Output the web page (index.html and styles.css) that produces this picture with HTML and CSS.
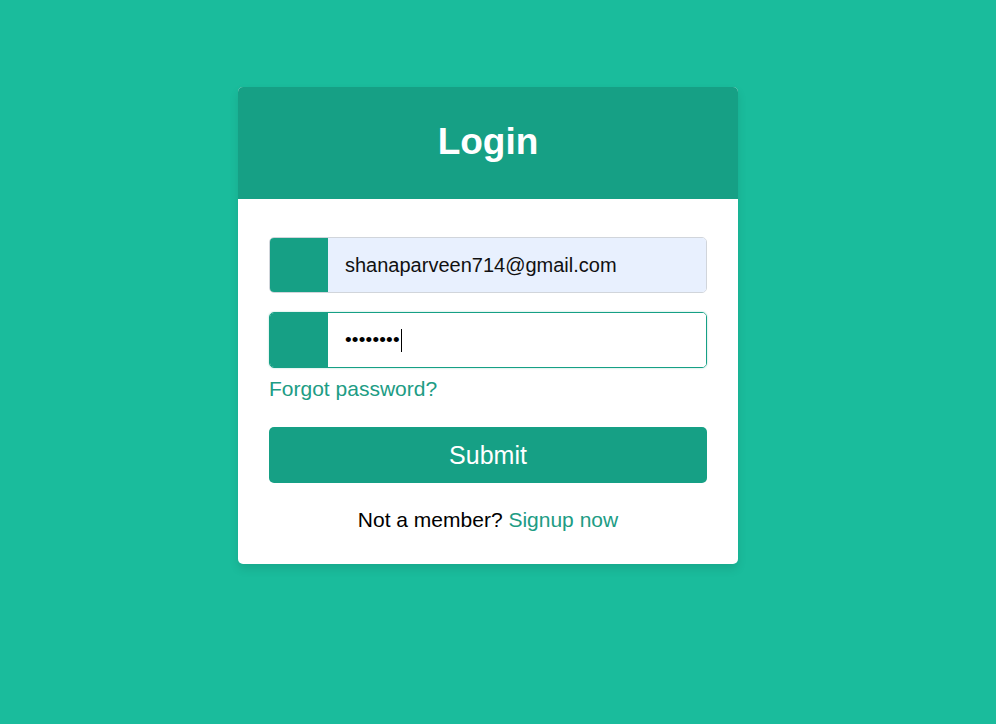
FILE: index.html
```html
<!DOCTYPE html>
<html>
<head>
<meta charset="utf-8">
<link rel="stylesheet" href="styles.css">
</head>
<body>
<div class="wrapper">
  <div class="title">Login</div>
  <form class="form">
    <div class="row">
      <span class="icon"></span>
      <input class="field autofill" type="text" value="shanaparveen714@gmail.com">
    </div>
    <div class="row focus">
      <span class="icon"></span>
      <div class="field pass"><span class="dots">••••••••</span><span class="caret"></span></div>
    </div>
    <div class="pass-link"><a href="#">Forgot password?</a></div>
    <div class="button">Submit</div>
    <div class="signup">Not a member? <a href="#">Signup now</a></div>
  </form>
</div>
</body>
</html>
```

FILE: styles.css
```css
* { box-sizing: border-box; margin: 0; padding: 0; }
body {
  background: #1abc9c;
  font-family: "Liberation Sans", Arial, sans-serif;
  width: 996px;
  height: 724px;
  padding-top: 87px;
}
.wrapper {
  width: 500px;
  margin: 0 auto 0 238px;
  background: #fff;
  border-radius: 5px;
  box-shadow: 0 5px 10px rgba(0,0,0,0.1);
  overflow: hidden;
}
.title {
  height: 112px;
  background: #16a085;
  color: #fff;
  font-size: 37px;
  font-weight: bold;
  display: flex;
  align-items: center;
  justify-content: center;
  padding-bottom: 2px;
}
.form {
  padding: 38px 31px 0 31px;
  display: flex;
  flex-direction: column;
}
.row {
  height: 56px;
  display: flex;
  border: 1px solid #d1d5db;
  border-radius: 5px;
  overflow: hidden;
}
.row + .row { margin-top: 19px; }
.row.focus { border-color: #16a085; box-shadow: 0 0 2px rgba(22,160,133,0.4); }
.icon {
  width: 58px;
  background: #16a085;
  flex: none;
}
.field {
  flex: 1;
  border: none;
  outline: none;
  font-family: "Liberation Sans", Arial, sans-serif;
  font-size: 20px;
  padding-left: 17px;
  color: #111;
  background: #fff;
}
.field.autofill { background: #e8f0fe; }
.pass { display: flex; align-items: center; }
.dots { font-size: 19px; letter-spacing: 0.2px; color: #000; }
.caret { width: 1px; height: 23px; background: #000; margin-left: 1px; }
.pass-link {
  margin-top: 9px;
  font-size: 21px;
  line-height: 24px;
}
.pass-link a, .signup a { color: #209c84; text-decoration: none; }
.button {
  margin-top: 26px;
  height: 56px;
  background: #16a085;
  border-radius: 5px;
  color: #fff;
  font-size: 25px;
  display: flex;
  align-items: center;
  justify-content: center;
}
.signup {
  margin-top: 25px;
  text-align: center;
  font-size: 21px;
  line-height: 24px;
  color: #000;
  padding-bottom: 32px;
}
```
